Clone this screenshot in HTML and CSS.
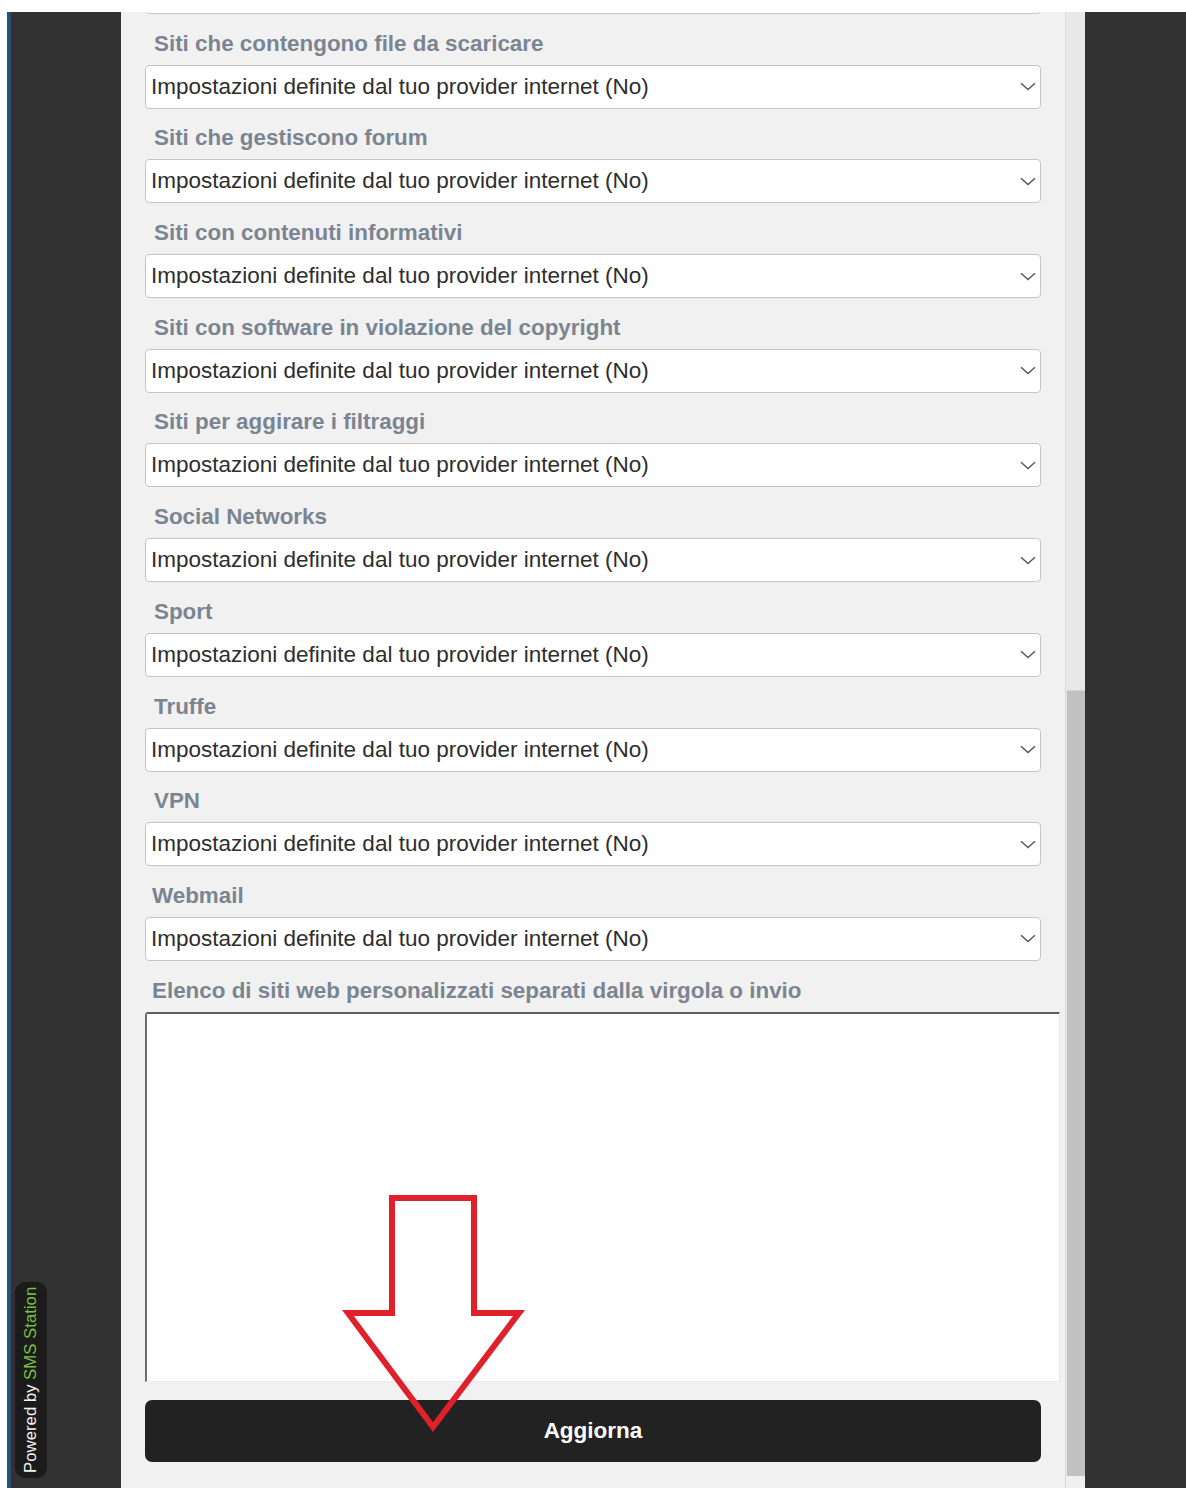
FILE: index.html
```html
<!DOCTYPE html>
<html lang="it">
<head>
<meta charset="utf-8">
<title>Filtri di navigazione</title>
<link rel="stylesheet" href="styles.css">
</head>
<body>
<div class="frame">
  <div class="rail-left"></div>
  <main class="panel">
    <form class="form">
      <div class="select select-cut"></div>

      <div class="field">
        <label class="label">Siti che contengono file da scaricare</label>
        <div class="select"><span>Impostazioni definite dal tuo provider internet (No)</span><svg class="chev" viewBox="0 0 16 9"><path d="M1 1.2 L8 7.6 L15 1.2"/></svg></div>
      </div>
      <div class="field">
        <label class="label">Siti che gestiscono forum</label>
        <div class="select"><span>Impostazioni definite dal tuo provider internet (No)</span><svg class="chev" viewBox="0 0 16 9"><path d="M1 1.2 L8 7.6 L15 1.2"/></svg></div>
      </div>
      <div class="field">
        <label class="label">Siti con contenuti informativi</label>
        <div class="select"><span>Impostazioni definite dal tuo provider internet (No)</span><svg class="chev" viewBox="0 0 16 9"><path d="M1 1.2 L8 7.6 L15 1.2"/></svg></div>
      </div>
      <div class="field">
        <label class="label">Siti con software in violazione del copyright</label>
        <div class="select"><span>Impostazioni definite dal tuo provider internet (No)</span><svg class="chev" viewBox="0 0 16 9"><path d="M1 1.2 L8 7.6 L15 1.2"/></svg></div>
      </div>
      <div class="field">
        <label class="label">Siti per aggirare i filtraggi</label>
        <div class="select"><span>Impostazioni definite dal tuo provider internet (No)</span><svg class="chev" viewBox="0 0 16 9"><path d="M1 1.2 L8 7.6 L15 1.2"/></svg></div>
      </div>
      <div class="field">
        <label class="label">Social Networks</label>
        <div class="select"><span>Impostazioni definite dal tuo provider internet (No)</span><svg class="chev" viewBox="0 0 16 9"><path d="M1 1.2 L8 7.6 L15 1.2"/></svg></div>
      </div>
      <div class="field">
        <label class="label">Sport</label>
        <div class="select"><span>Impostazioni definite dal tuo provider internet (No)</span><svg class="chev" viewBox="0 0 16 9"><path d="M1 1.2 L8 7.6 L15 1.2"/></svg></div>
      </div>
      <div class="field">
        <label class="label">Truffe</label>
        <div class="select"><span>Impostazioni definite dal tuo provider internet (No)</span><svg class="chev" viewBox="0 0 16 9"><path d="M1 1.2 L8 7.6 L15 1.2"/></svg></div>
      </div>
      <div class="field">
        <label class="label">VPN</label>
        <div class="select"><span>Impostazioni definite dal tuo provider internet (No)</span><svg class="chev" viewBox="0 0 16 9"><path d="M1 1.2 L8 7.6 L15 1.2"/></svg></div>
      </div>
      <div class="field">
        <label class="label label-tight">Webmail</label>
        <div class="select"><span>Impostazioni definite dal tuo provider internet (No)</span><svg class="chev" viewBox="0 0 16 9"><path d="M1 1.2 L8 7.6 L15 1.2"/></svg></div>
      </div>
      <div class="field">
        <label class="label label-tight">Elenco di siti web personalizzati separati dalla virgola o invio</label>
        <textarea class="textarea"></textarea>
      </div>

      <button type="button" class="submit">Aggiorna</button>
    </form>

    <!-- annotation arrow pointing at the submit button -->
    <svg class="hint-arrow" viewBox="0 0 178 240">
      <polygon points="47,4 129,4 129,119 174,119 88,233 3,119 47,119"/>
    </svg>
  </main>
  <div class="scrollbar">
    <div class="scroll-thumb"></div>
    <div class="scroll-arrow"></div>
  </div>
  <div class="rail-right"></div>
</div>

<div class="powered"><span>Powered by </span><span class="brand">SMS Station</span></div>
</body>
</html>
```

FILE: styles.css
```css
html, body {
  margin: 0;
  padding: 0;
}

body {
  background: #ffffff;
  font-family: "Liberation Sans", Arial, sans-serif;
  height: 1488px;
  overflow: hidden;
  position: relative;
}

.frame {
  display: flex;
  margin-top: 12px;
  height: 1476px;
}

.rail-left {
  width: 114px;
  margin-left: 7px;
  box-sizing: border-box;
  background: #323232;
  border-left: 4px solid #25527c;
  box-shadow: inset 3px 0 0 #3a2e27;
}

.panel {
  position: relative;
  width: 944px;
  background: #f1f1f1;
  overflow: hidden;
}

.form {
  display: flex;
  flex-direction: column;
  padding-left: 24px;
}

.field {
  display: flex;
  flex-direction: column;
  padding-top: 18.7px;
}

.label {
  display: block;
  padding-left: 9px;
  height: 22px;
  line-height: 22px;
  margin-bottom: 10px;
  font-size: 22.4px;
  font-weight: bold;
  color: #7a8591;
  white-space: nowrap;
}

.label-tight {
  padding-left: 7px;
}

.select {
  display: flex;
  align-items: center;
  width: 896px;
  height: 44px;
  box-sizing: border-box;
  background: #ffffff;
  border: 1px solid #c6c6c6;
  border-radius: 4px;
  padding: 0 4px 0 5px;
  font-size: 22.5px;
  color: #2e2e2e;
  white-space: nowrap;
}

.select-cut {
  margin-top: -42px;
}

.chev {
  margin-left: auto;
  width: 16px;
  height: 9px;
}

.chev path {
  fill: none;
  stroke: #5a5a5a;
  stroke-width: 1.5;
}

.textarea {
  display: block;
  width: 915px;
  height: 370px;
  box-sizing: border-box;
  margin: 0;
  padding: 4px;
  background: #ffffff;
  border-style: solid;
  border-width: 2px 1px 1px 2px;
  border-color: #5e5e5e #e4e4e4 #ececec #6e6e6e;
  border-radius: 3px 0 0 0;
  resize: none;
  font-family: inherit;
  font-size: 20px;
}

.submit {
  margin-top: 18px;
  width: 896px;
  height: 62px;
  border: 0;
  border-radius: 7px;
  background: #222222;
  color: #ffffff;
  font-family: inherit;
  font-size: 22.5px;
  font-weight: bold;
  padding: 0;
  cursor: pointer;
}

.hint-arrow {
  position: absolute;
  left: 224px;
  top: 1182px;
  width: 178px;
  height: 240px;
  overflow: visible;
}

.hint-arrow polygon {
  fill: none;
  stroke: #e0202a;
  stroke-width: 6;
  stroke-linejoin: miter;
}

.scrollbar {
  width: 20px;
  box-sizing: border-box;
  background: #e8e8e8;
  border-left: 1px solid #d9d9d9;
  display: flex;
  flex-direction: column;
}

.scroll-thumb {
  margin-top: 678px;
  height: 786px;
  margin-left: 1px;
  background: #c1c1c1;
  border-top: 1px solid #d4d4d4;
}

.scroll-arrow {
  height: 12px;
  background: #f0f0f0;
}

.rail-right {
  flex: 1;
  background: #323232;
}

.powered {
  position: absolute;
  left: 15px;
  top: 1282px;
  width: 32px;
  height: 196px;
  box-sizing: border-box;
  background: #1b1b1b;
  border-radius: 10px;
  writing-mode: vertical-rl;
  transform: rotate(180deg);
  display: flex;
  align-items: center;
  justify-content: center;
  font-size: 16.8px;
  color: #f2f2f2;
  white-space: nowrap;
}

.powered span {
  white-space: pre;
}

.powered .brand {
  color: #79c040;
}
```
